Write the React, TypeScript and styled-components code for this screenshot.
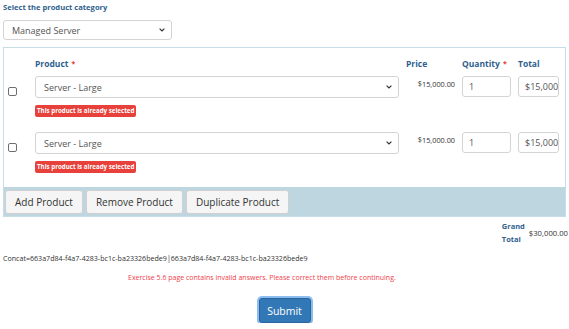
import React from "react";
import styled, { createGlobalStyle } from "styled-components";

const Global = createGlobalStyle`
  html, body { margin: 0; padding: 0; background: #fff; }
  body { font-family: "Open Sans", "Noto Sans", Arial, sans-serif; color: #333; }
  * { box-sizing: border-box; }
`;

const Page = styled.div`
  width: 569px;
  padding: 0 3px;
  display: flex;
  flex-direction: column;
`;

const Label = styled.div`
  margin-top: 2px;
  font-size: 7.6px;
  line-height: 10px;
  font-weight: 700;
  color: #2f5f8f;
`;

const SelectBox = styled.div<{ $w?: number; $h: number }>`
  position: relative;
  width: ${(p) => (p.$w ? `${p.$w}px` : "100%")};
  height: ${(p) => p.$h}px;
  border: 1px solid #d4d4d4;
  border-radius: 3px;
  background: #fff;
  display: flex;
  align-items: center;
  padding-left: 8px;
  font-size: 9px;
  color: #555;
`;

const Chevron = styled.svg`
  position: absolute;
  right: 6px;
  top: 50%;
  margin-top: -2px;
`;

const CategorySelect = styled(SelectBox)`
  margin-top: 8px;
`;

const Panel = styled.div`
  margin-top: 7px;
  border: 1px solid #c6dce7;
  display: flex;
  flex-direction: column;
`;

const Grid = styled.div`
  display: grid;
  grid-template-columns: 24px 364px 49px 49px 41px;
  column-gap: 7px;
  padding-top: 10px;
`;

const Head = styled.div`
  font-size: 8.5px;
  line-height: 12px;
  font-weight: 700;
  color: #2f5f8f;
  margin-bottom: 6px;
  white-space: nowrap;
`;

const Req = styled.span`
  color: #e53935;
  margin-left: 3px;
  font-size: 7px;
  vertical-align: top;
`;

const Cell = styled.div<{ $last?: boolean }>`
  display: flex;
  flex-direction: column;
  align-items: flex-start;
  min-width: 0;
  margin-bottom: ${(p) => (p.$last ? 14 : 15)}px;
`;

const Check = styled.span`
  margin-top: 11px;
  margin-left: 4px;
  width: 9px;
  height: 9px;
  border: 1px solid #6f6f6f;
  border-radius: 2px;
  background: #fff;
`;

const Badge = styled.span`
  margin-top: 7px;
  height: 12px;
  padding: 0 2px;
  border-radius: 2px;
  background: #e8403a;
  color: #fff;
  font-size: 6.2px;
  font-weight: 700;
  line-height: 12px;
  white-space: nowrap;
`;

const Price = styled.div`
  padding-top: 3px;
  width: 100%;
  text-align: right;
  font-size: 7.3px;
  line-height: 10px;
  color: #333;
`;

const Input = styled.div`
  width: 100%;
  height: 21px;
  border: 1px solid #d4d4d4;
  border-radius: 3px;
  padding-left: 6px;
  font-size: 9px;
  color: #555;
  display: flex;
  align-items: center;
  overflow: hidden;
  white-space: nowrap;
`;

const Bar = styled.div`
  height: 29px;
  background: #bed6e0;
  display: flex;
  align-items: center;
  gap: 3px;
  padding: 0 1px;
`;

const Btn = styled.button`
  margin: 0;
  height: 24px;
  padding: 0 9px;
  border: 1px solid #d0d0d0;
  border-radius: 3px;
  background: #f5f5f5;
  font-family: inherit;
  font-size: 10px;
  color: #333;
`;

const TotalRow = styled.div`
  margin-top: 3px;
  margin-right: -2px;
  display: flex;
  justify-content: flex-end;
  align-items: center;
  gap: 2px;
`;

const GrandLabel = styled.div`
  width: 25px;
  font-size: 7.5px;
  line-height: 13px;
  font-weight: 700;
  color: #2f5f8f;
`;

const GrandValue = styled.div`
  font-size: 7.7px;
  color: #333;
`;

const Concat = styled.div`
  margin-top: 7px;
  font-size: 7.1px;
  line-height: 10px;
  color: #333;
`;

const ErrorMsg = styled.div`
  margin-top: 10px;
  padding-left: 125px;
  font-size: 7px;
  line-height: 10px;
  color: #f0404a;
`;

const SubmitWrap = styled.div`
  margin-top: 15px;
  display: flex;
  justify-content: center;
`;

const Submit = styled.button`
  width: 52px;
  height: 25px;
  border: 1px solid #2a649a;
  border-radius: 3px;
  background: #3378b6;
  color: #fff;
  font-family: inherit;
  font-size: 10.5px;
  box-shadow: 0 0 0 2px #8cbdf0;
`;

const Chev = () => (
  <Chevron width="6" height="4" viewBox="0 0 6 4">
    <path d="M0.6 0.6 L3 3 L5.4 0.6" fill="none" stroke="#333" strokeWidth="1.2" />
  </Chevron>
);

const rows = [0, 1];

export default function App() {
  return (
    <>
      <Global />
      <Page>
        <Label>Select the product category</Label>
        <CategorySelect $w={169} $h={20}>
          Managed Server
          <Chev />
        </CategorySelect>
        <Panel>
          <Grid>
            <div />
            <Head>
              Product<Req>*</Req>
            </Head>
            <Head>Price</Head>
            <Head>
              Quantity<Req>*</Req>
            </Head>
            <Head>Total</Head>
            {rows.map((r) => (
              <React.Fragment key={r}>
                <Cell $last={r === 1}>
                  <Check />
                </Cell>
                <Cell $last={r === 1}>
                  <SelectBox $h={22}>
                    Server - Large
                    <Chev />
                  </SelectBox>
                  <Badge>This product is already selected</Badge>
                </Cell>
                <Cell $last={r === 1}>
                  <Price>$15,000.00</Price>
                </Cell>
                <Cell $last={r === 1}>
                  <Input>1</Input>
                </Cell>
                <Cell $last={r === 1}>
                  <Input>$15,000.00</Input>
                </Cell>
              </React.Fragment>
            ))}
          </Grid>
          <Bar>
            <Btn>Add Product</Btn>
            <Btn>Remove Product</Btn>
            <Btn>Duplicate Product</Btn>
          </Bar>
        </Panel>
        <TotalRow>
          <GrandLabel>Grand Total</GrandLabel>
          <GrandValue>$30,000.00</GrandValue>
        </TotalRow>
        <Concat>
          Concat=663a7d84-f4a7-4283-bc1c-ba23326bede9|663a7d84-f4a7-4283-bc1c-ba23326bede9
        </Concat>
        <ErrorMsg>
          Exercise 5.6 page contains invalid answers. Please correct them before continuing.
        </ErrorMsg>
        <SubmitWrap>
          <Submit>Submit</Submit>
        </SubmitWrap>
      </Page>
    </>
  );
}
